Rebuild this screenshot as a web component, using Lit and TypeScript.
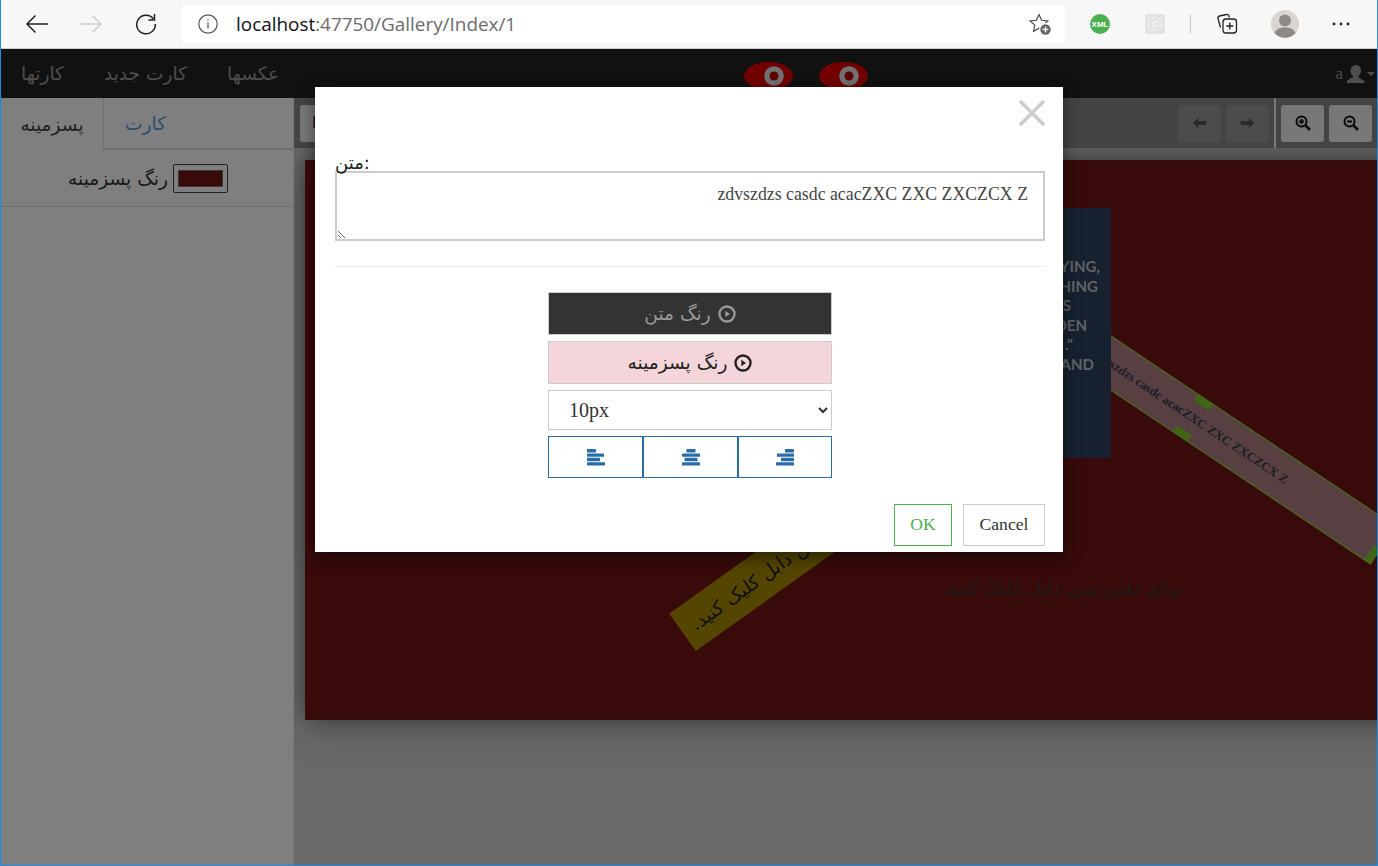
import { LitElement, css, html, svg } from 'lit'
import { customElement } from 'lit/decorators.js'

const posterLines = [
  { text: 'LYING,', right: 11 },
  { text: 'NOTHING', right: 13 },
  { text: 'IS', right: 40 },
  { text: 'HIDDEN', right: 24 },
  { text: '."', right: 38 },
  { text: 'LAND', right: 17 },
]

const alignIcons = [
  [
    [0, 9],
    [0, 17],
    [0, 13],
    [0, 18],
  ],
  [
    [4.5, 9],
    [0, 18],
    [2.5, 13],
    [0, 18],
  ],
  [
    [9, 9],
    [1, 17],
    [5, 13],
    [0, 18],
  ],
]

@customElement('browser-bar')
export class BrowserBar extends LitElement {
  static styles = css`
    :host {
      display: flex;
      align-items: center;
      height: 48px;
      flex: none;
      background: #f7f7f7;
      border-bottom: 1px solid #cfcfcf;
      font-family: 'Open Sans', sans-serif;
    }
    .nav {
      display: flex;
      align-items: center;
      gap: 30px;
      padding-left: 24px;
      width: 180px;
      box-sizing: border-box;
    }
    .nav svg {
      display: block;
    }
    .nav .reload {
      margin-left: 2px;
    }
    .url {
      display: flex;
      align-items: center;
      width: 884px;
      height: 38px;
      box-sizing: border-box;
      padding: 0 14px 0 17px;
      background: #fff;
      border-radius: 6px;
    }
    .address {
      margin-left: 18px;
      flex: 1;
      font-size: 18.900px;
      color: #111;
    }
    .address span {
      color: #6b6b6b;
    }
    .tools {
      display: flex;
      align-items: center;
      flex: 1;
      padding-left: 25px;
    }
    .ext {
      width: 20px;
      height: 20px;
      border-radius: 50%;
      background: #4caf50;
      color: #fff;
      font: bold 8px 'Liberation Sans', sans-serif;
      display: flex;
      align-items: center;
      justify-content: center;
      overflow: hidden;
    }
    .ext2 {
      width: 20px;
      height: 20px;
      margin-left: 35px;
      background: #e3e3e3;
      border-radius: 2px;
      display: flex;
      align-items: center;
      justify-content: center;
    }
    .divider {
      width: 1px;
      height: 20px;
      margin-left: 25px;
      background: #c8c8c8;
    }
    .collect {
      margin-left: 25px;
    }
    .avatar {
      margin-left: 33px;
    }
    .more {
      margin-left: 33px;
    }
  `

  render() {
    return html`
      <div class="nav">
        <svg width="24" height="20" viewBox="0 0 24 20" fill="none" stroke="#222" stroke-width="1.5">
          <path d="M23 10H2M10.500 1.500L2 10l8.500 8.500" />
        </svg>
        <svg width="24" height="20" viewBox="0 0 24 20" fill="none" stroke="#cfcfcf" stroke-width="1.5">
          <path d="M1 10h21M13.500 1.500L22 10l-8.500 8.500" />
        </svg>
        <svg class="reload" width="22" height="22" viewBox="0 0 22 22" fill="none" stroke="#222" stroke-width="1.5">
          <path d="M18.500 6A9.300 9.300 0 1 0 20.300 11" />
          <path d="M19.500 1v6h-6" />
        </svg>
      </div>
      <div class="url">
        <svg width="20" height="20" viewBox="0 0 20 20" fill="none" stroke="#555" stroke-width="1.200">
          <circle cx="10" cy="10" r="9.200" />
          <path d="M10 8.500v6M10 5v1.600" />
        </svg>
        <div class="address">localhost<span>:47750/Gallery/Index/1</span></div>
        <svg width="22" height="22" viewBox="0 0 22 22" fill="none" stroke="#444" stroke-width="1.100">
          <path d="M10 1.500L12.600 7.200 18.900 7.900 14.200 12.100 15.500 18.300 10 15.200 4.500 18.300 5.800 12.100 1.100 7.900 7.400 7.200z" />
          <circle cx="16.500" cy="16.500" r="6.500" fill="#fff" stroke="none" />
          <circle cx="16.500" cy="16.500" r="5.200" fill="#666" stroke="none" />
          <path d="M16.500 13.800v5.400M13.800 16.500h5.400" stroke="#fff" stroke-width="1.300" />
        </svg>
      </div>
      <div class="tools">
        <div class="ext">XML</div>
        <div class="ext2">
          <svg width="16" height="16" viewBox="0 0 16 16" fill="none" stroke="#fff">
            <circle cx="8" cy="8" r="6.500" stroke-dasharray="2 1" />
            <circle cx="8" cy="8" r="2.500" />
          </svg>
        </div>
        <div class="divider"></div>
        <svg class="collect" width="22" height="22" viewBox="0 0 22 22" fill="none" stroke="#222" stroke-width="1.300">
          <path d="M4.500 14.500L2 5.500c-.3-1.300.3-2.200 1.500-2.500l7-1.500c1.200-.2 2 .3 2.500 1.500l.3 1.500" />
          <rect x="7" y="6" width="13.500" height="14" rx="3" fill="#f7f7f7" />
          <path d="M13.800 9.500v7M10.300 13h7" />
        </svg>
        <svg class="avatar" width="28" height="28" viewBox="0 0 28 28">
          <circle cx="14" cy="14" r="14" fill="#d9d6d2" />
          <circle cx="14" cy="10.500" r="6" fill="#8e8a86" />
          <path d="M3.500 23c2-4.500 6-5.500 10.500-5.500S22.500 18.500 24.500 23A14 14 0 0 1 3.500 23z" fill="#8e8a86" />
        </svg>
        <svg class="more" width="18" height="4" viewBox="0 0 18 4" fill="#222">
          <circle cx="2" cy="2" r="1.400" />
          <circle cx="9" cy="2" r="1.400" />
          <circle cx="16" cy="2" r="1.400" />
        </svg>
      </div>
    `
  }
}

@customElement('app-root')
export class AppRoot extends LitElement {
  static styles = css`
    :host {
      display: flex;
      flex-direction: column;
      position: relative;
      width: 1378px;
      height: 866px;
      box-sizing: border-box;
      overflow: hidden;
      border: 1px solid #1e88e5;
      border-top: none;
      font-family: 'DejaVu Sans', sans-serif;
    }
    .app {
      position: relative;
      flex: 1;
      display: flex;
      flex-direction: column;
      min-height: 0;
    }
    .topnav {
      display: flex;
      align-items: center;
      height: 49px;
      flex: none;
      background: #222;
      color: #9d9d9d;
      font-size: 18.600px;
      position: relative;
    }
    .links {
      display: flex;
      flex: none;
      width: 743px;
    }
    .links a {
      padding: 0 20px;
    }
    .eyes {
      display: flex;
      gap: 26px;
      margin-top: 4px;
    }
    .user {
      flex: 1;
      display: flex;
      justify-content: flex-end;
      align-items: center;
      padding-right: 1px;
      font: 17px 'Liberation Serif', serif;
      gap: 3px;
    }
    .body {
      flex: 1;
      display: flex;
      min-height: 0;
    }
    .side {
      width: 292px;
      flex: none;
      background: #fff;
      color: #333;
      font-size: 18.600px;
      border-right: 1px solid #f0f0f0;
    }
    .tabs {
      display: flex;
      height: 52px;
    }
    .tab {
      display: flex;
      align-items: center;
      justify-content: center;
      box-sizing: border-box;
    }
    .tab.on {
      width: 103px;
      color: #444;
      border-right: 1px solid #ddd;
    }
    .tab.off {
      flex: 1;
      justify-content: flex-start;
      padding-left: 21px;
      color: #5a9cde;
      border-bottom: 2px solid #ddd;
    }
    .color-row {
      display: flex;
      flex-direction: row-reverse;
      align-items: center;
      justify-content: center;
      gap: 5px;
      height: 55px;
      padding-left: 2px;
      border-bottom: 1px solid #ddd;
      margin-top: 1px;
    }
    .swatch {
      width: 55px;
      height: 29px;
      box-sizing: border-box;
      padding: 5px 4px;
      border: 1px solid #444;
      border-radius: 2px;
      background: #fff;
    }
    .swatch div {
      height: 100%;
      box-sizing: border-box;
      background: #701414;
      border: 1px solid #777;
    }
    .main {
      flex: 1;
      display: flex;
      flex-direction: column;
      min-width: 0;
      background: #d2d2d2;
    }
    .toolbar {
      display: flex;
      align-items: center;
      height: 50px;
      flex: none;
      position: relative;
      z-index: 2;
      background: #888;
      padding: 0 5px 0 6px;
      box-sizing: border-box;
      gap: 5px;
    }
    .tbtn {
      width: 43px;
      height: 37px;
      border-radius: 3px;
      background: #f0f0f0;
      display: flex;
      align-items: center;
      justify-content: center;
    }
    .tbtn.off {
      background: #999;
    }
    .tbtn.first {
      width: 80px;
      height: 37px;
      justify-content: flex-start;
      padding-left: 12px;
      box-sizing: border-box;
      font: 16px 'Liberation Sans', sans-serif;
      color: #222;
    }
    .spacer {
      flex: 1;
    }
    .sep {
      width: 2px;
      height: 50px;
      background: #f0f0f0;
    }
    .stage {
      flex: 1;
      min-height: 0;
      overflow: hidden;
      padding: 12px 0 0 11px;
      position: relative;
    }
    .canvas {
      position: relative;
      width: 1100px;
      height: 560px;
      background: #701414;
      box-shadow: 0 0 30px rgba(0, 0, 0, 0.55);
    }
    .poster {
      position: absolute;
      left: 556px;
      top: 48px;
      width: 250px;
      height: 250px;
      z-index: 2;
      background: #2f4360;
      box-sizing: border-box;
      padding-top: 49px;
      display: flex;
      flex-direction: column;
      font: bold 15px/19.600px 'Lato', sans-serif;
      color: #c0c6cc;
      text-align: right;
    }
    .band {
      position: absolute;
      box-sizing: border-box;
      height: 46px;
      display: flex;
      align-items: center;
      justify-content: center;
      white-space: nowrap;
    }
    .band.pink {
      left: 659px;
      top: 235px;
      width: 458px;
      padding-right: 5px;
      transform: rotate(33.8deg);
      background: #b08085;
      border: 1px solid #8fdc22;
      font: bold 12.600px 'Liberation Serif', serif;
      color: #333a4a;
    }
    .band.gold {
      left: 353px;
      top: 373px;
      width: 263px;
      transform: rotate(-35.500deg);
      background: #a88c00;
      font-size: 18.900px;
      color: #222;
    }
    .handle {
      position: absolute;
      width: 18px;
      height: 8px;
      background: #80cc2a;
      left: 50%;
      margin-left: -9px;
    }
    .handle.t {
      top: -1px;
    }
    .handle.b {
      bottom: -1px;
    }
    .handle.c {
      right: -1px;
      bottom: -1px;
      left: auto;
      width: 8px;
      height: 18px;
    }
    .hint {
      position: absolute;
      left: 636px;
      top: 416px;
      font-size: 19px;
      color: #3a3030;
      white-space: nowrap;
    }
    .overlay {
      position: absolute;
      inset: 0;
      z-index: 5;
      background: rgba(0, 0, 0, 0.5);
      display: flex;
      justify-content: center;
      align-items: flex-start;
      padding-top: 38px;
    }
    .modal {
      width: 748px;
      height: 465px;
      box-sizing: border-box;
      background: #fff;
      box-shadow: 0 5px 15px rgba(0, 0, 0, 0.5);
      padding: 13px 18px 0 20px;
      color: #222;
    }
    .close {
      display: flex;
      justify-content: flex-end;
      height: 55px;
    }
    label {
      display: block;
      font-size: 18px;
      line-height: 16px;
      height: 16px;
    }
    textarea {
      display: block;
      width: 710px;
      height: 70px;
      box-sizing: border-box;
      margin: 0;
      padding: 11px 15px;
      border: 2px solid #ccc;
      outline: none;
      border-radius: 0;
      font: 17.800px 'Liberation Serif', serif;
      color: #444;
      background: #fff;
    }
    .rule {
      width: 710px;
      height: 1px;
      margin: 25px 0;
      background: #eee;
    }
    .controls {
      width: 284px;
      margin-left: 213px;
      display: flex;
      flex-direction: column;
      gap: 6px;
    }
    .pick {
      height: 43px;
      box-sizing: border-box;
      border: 1px solid #ccc;
      display: flex;
      flex-direction: row-reverse;
      align-items: center;
      justify-content: center;
      gap: 7px;
      font-size: 18.600px;
    }
    .pick.dark {
      background: #333;
      color: #999;
    }
    .pick.soft {
      background: #f4d5d9;
      color: #222;
    }
    select {
      height: 40px;
      width: 100%;
      box-sizing: border-box;
      border: 1px solid #ccc;
      border-radius: 0;
      background: #fff;
      outline: none;
      padding: 0 16px;
      font: 20px 'Liberation Serif', serif;
      color: #333;
    }
    .aligns {
      display: grid;
      grid-template-columns: 95px 95px 94px;
      height: 42px;
    }
    .aligns div {
      display: flex;
      align-items: center;
      justify-content: center;
      border: 1px solid #2a6ca8;
    }
    .footer {
      width: 710px;
      display: flex;
      justify-content: flex-end;
      gap: 11px;
      margin-top: 26px;
    }
    .fbtn {
      height: 42px;
      box-sizing: border-box;
      display: flex;
      align-items: center;
      justify-content: center;
      padding-bottom: 2px;
      border: 1px solid #ccc;
      font: 17.600px 'Liberation Serif', serif;
      color: #333;
    }
    .fbtn.ok {
      width: 58px;
      border-color: #4caf50;
      color: #4caf50;
    }
    .fbtn.cancel {
      width: 82px;
    }
  `

  private playIcon(color: string) {
    return html`<svg width="18" height="18" viewBox="0 0 18 18">
      <circle cx="9" cy="9" r="7.500" fill="none" stroke=${color} stroke-width="2.400" />
      <path d="M7.300 5.800L12 9l-4.700 3.200z" fill=${color} />
    </svg>`
  }

  private alignIcon(bars: number[][]) {
    return html`<svg width="18" height="17" viewBox="0 0 18 17" fill="#2a6ca8">
      ${bars.map(
        ([x, w], i) =>
          svg`<rect x=${x} y=${i * 4.4} width=${w} height="3.400" rx="0.600" />`,
      )}
    </svg>`
  }

  private eye() {
    return html`<svg width="49" height="28" viewBox="0 0 49 28">
      <ellipse cx="24.500" cy="14" rx="24.500" ry="14" fill="#e60000" />
      <circle cx="30" cy="14" r="9.800" fill="#e4e4e4" />
      <circle cx="30" cy="14" r="4.500" fill="#c00000" />
    </svg>`
  }

  render() {
    return html`
      <browser-bar></browser-bar>
      <div class="app">
        <div class="topnav">
          <div class="links">
            <a>کارتها</a>
            <a>کارت جدید</a>
            <a>عکسها</a>
          </div>
          <div class="eyes">${this.eye()}${this.eye()}</div>
          <div class="user">
            a
            <svg width="30" height="20" viewBox="0 0 30 20" fill="#9d9d9d">
              <path d="M10 1c3.500 0 5 2.500 5 5.500 0 2.500-1 4.500-2.500 5.500v1.500l6 3.500V19H1v-2.500l6-3.500V12C5.500 11 4.500 9 4.500 6.500 4.500 3.500 6.500 1 10 1z" />
              <path d="M21 8h8l-4 4z" />
            </svg>
          </div>
        </div>
        <div class="body">
          <div class="side">
            <div class="tabs">
              <div class="tab on">پسزمینه</div>
              <div class="tab off">کارت</div>
            </div>
            <div class="color-row">
              <div class="swatch"><div></div></div>
              <span>رنگ پسزمینه</span>
            </div>
          </div>
          <div class="main">
            <div class="toolbar">
              <div class="tbtn first">I</div>
              <div class="spacer"></div>
              <div class="tbtn off">
                <svg width="15" height="12" viewBox="0 0 16 14" fill="#555">
                  <path d="M0 7l6.500-6v3.800H16v4.400H6.500V13z" />
                </svg>
              </div>
              <div class="tbtn off">
                <svg width="15" height="12" viewBox="0 0 16 14" fill="#555">
                  <path d="M16 7L9.500 1v3.800H0v4.400h9.500V13z" />
                </svg>
              </div>
              <div class="sep"></div>
              <div class="tbtn">
                <svg width="16" height="16" viewBox="0 0 16 16" fill="none" stroke="#111" stroke-width="2">
                  <circle cx="6.500" cy="6.500" r="5" />
                  <path d="M10.500 10.500L15 15" stroke-width="2.500" />
                  <path d="M4 6.500h5M6.500 4v5" stroke-width="1.800" />
                </svg>
              </div>
              <div class="tbtn">
                <svg width="16" height="16" viewBox="0 0 16 16" fill="none" stroke="#111" stroke-width="2">
                  <circle cx="6.500" cy="6.500" r="5" />
                  <path d="M10.500 10.500L15 15" stroke-width="2.500" />
                  <path d="M4 6.500h5" />
                </svg>
              </div>
            </div>
            <div class="stage">
              <div class="canvas">
                <div class="band gold" dir="rtl">برای تغییر متن دابل کلیک کنید.</div>
                <div class="band pink">
                  zdvszdzs casdc acacZXC ZXC ZXCZCX Z
                  <span class="handle t"></span>
                  <span class="handle b"></span>
                  <span class="handle c"></span>
                </div>
                <div class="poster">
                  ${posterLines.map(
                    (l) => html`<div style="padding-right:${l.right}px">${l.text}</div>`,
                  )}
                </div>
                <div class="hint" dir="rtl">برای تغییر متن دابل کلیک کنید.</div>
              </div>
            </div>
          </div>
        </div>
        <div class="overlay">
          <div class="modal">
            <div class="close">
              <svg width="26" height="26" viewBox="0 0 26 26" stroke="#ccc" stroke-width="3.500">
                <path d="M1 1l24 24M25 1L1 25" />
              </svg>
            </div>
            <label>متن:</label>
            <textarea dir="rtl" .value=${'zdvszdzs casdc acacZXC ZXC ZXCZCX Z'}></textarea>
            <div class="rule"></div>
            <div class="controls">
              <div class="pick dark">${this.playIcon('#999')}<span>رنگ متن</span></div>
              <div class="pick soft">${this.playIcon('#222')}<span>رنگ پسزمینه</span></div>
              <select><option>10px</option></select>
              <div class="aligns">
                ${alignIcons.map((bars) => html`<div>${this.alignIcon(bars)}</div>`)}
              </div>
            </div>
            <div class="footer">
              <div class="fbtn ok">OK</div>
              <div class="fbtn cancel">Cancel</div>
            </div>
          </div>
        </div>
      </div>
    `
  }
}
